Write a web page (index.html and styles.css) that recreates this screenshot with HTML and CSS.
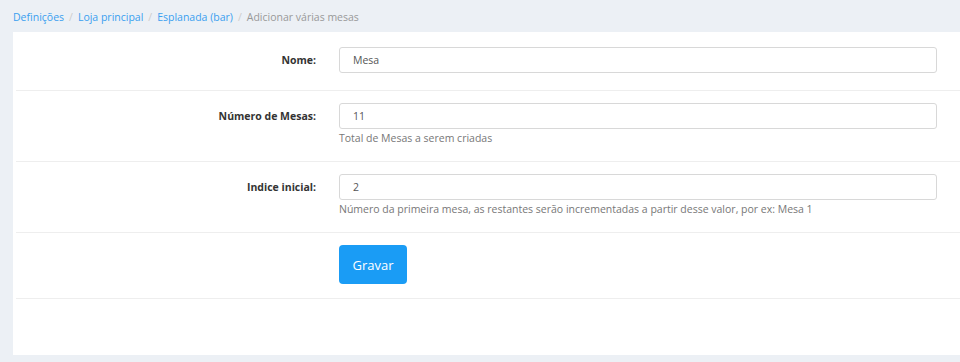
FILE: index.html
```html
<!DOCTYPE html>
<html lang="pt">
<head>
    <meta charset="UTF-8">
    <meta name="viewport" content="width=device-width, initial-scale=1.0">
    <title>Adicionar várias mesas</title>
    <link rel="stylesheet" href="styles.css">
</head>
<body>
    <nav class="breadcrumb">
        <a href="#">Definições</a>
        <span class="sep">/</span>
        <a href="#">Loja principal</a>
        <span class="sep">/</span>
        <a href="#">Esplanada (bar)</a>
        <span class="sep">/</span>
        <span class="current">Adicionar várias mesas</span>
    </nav>

    <main class="panel">
        <form class="form">
            <div class="form-row first">
                <label class="form-label" for="nome">Nome:</label>
                <div class="form-field">
                    <input type="text" id="nome" value="Mesa">
                </div>
            </div>
            <div class="form-row">
                <label class="form-label" for="numero">Número de Mesas:</label>
                <div class="form-field">
                    <input type="text" id="numero" value="11">
                    <p class="help">Total de Mesas a serem criadas</p>
                </div>
            </div>
            <div class="form-row">
                <label class="form-label" for="indice">Indice inicial:</label>
                <div class="form-field">
                    <input type="text" id="indice" value="2">
                    <p class="help">Número da primeira mesa, as restantes serão incrementadas a partir desse valor, por ex: Mesa 1</p>
                </div>
            </div>
            <div class="form-row last">
                <div class="form-label"></div>
                <div class="form-field">
                    <button type="submit" class="btn">Gravar</button>
                </div>
            </div>
        </form>
    </main>
</body>
</html>
```

FILE: styles.css
```css
:root {
    --link-color: #3a9ff0;
    --btn-color: #1a9cf5;
    --background-color: #ecf0f5;
    --text-color: #333;
    --line-color: #eeeeee;
}

* {
    margin: 0;
    padding: 0;
    box-sizing: border-box;
    font-family: 'Open Sans', 'Noto Sans', sans-serif;
}

body {
    background-color: var(--background-color);
    color: var(--text-color);
    font-size: 10.5px;
    padding: 0 0 7px 13px;
    height: 362px;
    overflow: hidden;
}

.breadcrumb {
    height: 32px;
    display: flex;
    align-items: center;
    padding-top: 2px;
}

.breadcrumb a {
    color: var(--link-color);
    text-decoration: none;
}

.breadcrumb .sep {
    color: #ccc;
    padding: 0 5px;
}

.breadcrumb .current {
    color: #999;
}

.panel {
    background: white;
    height: 323px;
    padding: 0 0 0 3px;
}

.form-row {
    display: grid;
    grid-template-columns: 300px 1fr;
    column-gap: 23px;
    padding: 12px 23px 15px 0;
    border-bottom: 1px solid var(--line-color);
}

.form-row.first {
    padding-top: 15px;
    padding-bottom: 17px;
}

.form-row.last {
    padding-bottom: 14px;
}

.form-label {
    text-align: right;
    font-weight: bold;
    line-height: 26px;
}

.form-field input {
    width: 100%;
    height: 26px;
    border: 1px solid #d8d8d8;
    border-radius: 3px;
    padding: 0 13px;
    font-size: 10.5px;
    color: #555;
}

.help {
    color: #777;
    line-height: 15px;
    margin-top: 2px;
}

.btn {
    width: 68px;
    height: 39px;
    background-color: var(--btn-color);
    color: white;
    border: none;
    border-radius: 4px;
    font-size: 13px;
    cursor: pointer;
}
```
